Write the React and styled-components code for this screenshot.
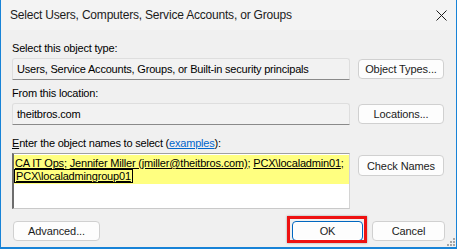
import React from "react";
import styled, { createGlobalStyle } from "styled-components";

const Global = createGlobalStyle`
  html, body { margin: 0; padding: 0; background: #f0f0f0; }
  body { font-family: "Liberation Sans", Arial, sans-serif; }
  * { box-sizing: border-box; }
`;

const Window = styled.div`
  position: relative;
  width: 457px;
  height: 249px;
  background: #f0f0f0;
  border-left: 1px solid #1883d7;
  border-right: 1px solid #1883d7;
  border-bottom: 2px solid #1883d7;
  display: flex;
  flex-direction: column;
  font-family: "Liberation Sans", Arial, sans-serif;
  color: #000;
  overflow: hidden;
`;

const TitleBar = styled.div`
  height: 30px;
  flex: none;
  display: flex;
  align-items: center;
  justify-content: space-between;
  padding: 0 9px 0 9px;
  background: #f3f3f3;
  font-size: 12px;
  letter-spacing: -0.2px;
  color: #1b1b1b;
`;

const Body = styled.div`
  flex: 1;
  display: flex;
  flex-direction: column;
  padding: 12px 11px 0 11px;
`;

const Label = styled.div`
  font-size: 11px;
  line-height: 13px;
  height: 13px;
  letter-spacing: -0.2px;
  margin-top: ${(p) => p.$top || 0}px;
  margin-bottom: 3px;
  white-space: nowrap;
`;

const Row = styled.div`
  display: grid;
  grid-template-columns: 338px 86px;
  column-gap: 8px;
  align-items: ${(p) => (p.$top ? "start" : "center")};
`;

const Field = styled.div`
  height: 22px;
  display: flex;
  align-items: center;
  padding-left: 4px;
  font-size: 11px;
  letter-spacing: -0.2px;
  background: #f2f2f2;
  border: 1px solid #dedede;
  border-bottom: 1px solid #8a8a8a;
  border-radius: 3px 3px 0 0;
  white-space: nowrap;
  overflow: hidden;
`;

const Button = styled.button`
  position: relative;
  height: ${(p) => p.$h || 20}px;
  width: ${(p) => (p.$w ? `${p.$w}px` : "auto")};
  margin-top: ${(p) => p.$mt || 0}px;
  padding: 0;
  font-family: "Liberation Sans", Arial, sans-serif;
  font-size: 11px;
  letter-spacing: -0.1px;
  color: #1b1b1b;
  background: #fdfdfd;
  border: 1px solid ${(p) => (p.$default ? "#0067c0" : "#d0d0d0")};
  box-shadow: ${(p) => (p.$default ? "inset 0 0 0 1px #ffffff" : "none")};
  border-radius: 4px;
  display: flex;
  align-items: center;
  justify-content: center;
`;

const Highlight = styled.span`
  position: absolute;
  inset: -6px -5px -3px -6px;
  border: 3px solid #ee1111;
  box-shadow: 0 0 2px rgba(0, 0, 0, 0.35);
  pointer-events: none;
`;

const Accel = styled.span`
  text-decoration: underline;
`;

const Link = styled.span`
  color: #0066cc;
  text-decoration: underline;
`;

const NamesBox = styled.div`
  height: 56px;
  background: #ffffff;
  border-top: 1px solid #a0a0a0;
  border-left: 2px solid #6d6d6d;
  border-right: 1px solid #d4d4d4;
  border-bottom: 1px solid #c9c9c9;
  padding-top: 1px;
`;

const Yellow = styled.div`
  background: #ffff80;
  padding: 2px 0 1px 1px;
`;

const Line = styled.div`
  font-size: 11px;
  line-height: 13px;
  height: 13px;
  white-space: nowrap;
  letter-spacing: -0.18px;
`;

const Name = styled.span`
  text-decoration: underline;
  ${(p) => (p.$focus ? "outline: 1px solid #000; outline-offset: 0px; padding: 0 1px;" : "")}
`;

const Footer = styled.div`
  display: flex;
  align-items: center;
  margin-top: 12px;
  padding-left: 1px;
  gap: 9px;
`;

const Spacer = styled.div`
  flex: 1;
`;

const Grip = styled.svg`
  position: absolute;
  right: 1px;
  bottom: 1px;
`;

const CloseIcon = () => (
  <svg width="11" height="11" viewBox="0 0 11 11">
    <path d="M0.5 0.5 L10.5 10.5 M10.5 0.5 L0.5 10.5" stroke="#1b1b1b" strokeWidth="1" fill="none" />
  </svg>
);

export default function App() {
  return (
    <>
      <Global />
      <Window>
        <TitleBar>
          <span>Select Users, Computers, Service Accounts, or Groups</span>
          <CloseIcon />
        </TitleBar>
        <Body>
          <Label>Select this object type:</Label>
          <Row>
            <Field>Users, Service Accounts, Groups, or Built-in security principals</Field>
            <Button>Object Types...</Button>
          </Row>
          <Label $top={7}>From this location:</Label>
          <Row>
            <Field>theitbros.com</Field>
            <Button>Locations...</Button>
          </Row>
          <Label $top={12}>
            <Accel>E</Accel>nter the object names to select (<Link>examples</Link>):
          </Label>
          <Row $top>
            <NamesBox>
              <Yellow>
                <Line>
                  <Name>CA IT Ops</Name>; <Name>Jennifer Miller (jmiller@theitbros.com)</Name>;{" "}
                  <Name>PCX\localadmin01</Name>;
                </Line>
                <Line>
                  <Name $focus>PCX\localadmingroup01</Name>
                </Line>
              </Yellow>
            </NamesBox>
            <Button $mt={2} $h={21}>Check Names</Button>
          </Row>
          <Footer>
            <Button $w={87}>Advanced...</Button>
            <Spacer />
            <Button $w={71} $default>
              OK
              <Highlight />
            </Button>
            <Button $w={73}>Cancel</Button>
          </Footer>
        </Body>
        <Grip width="9" height="9" viewBox="0 0 9 9">
          {[
            [7, 1],
            [4, 4],
            [7, 4],
            [1, 7],
            [4, 7],
            [7, 7],
          ].map(([x, y]) => (
            <rect key={`${x}-${y}`} x={x} y={y} width="2" height="2" fill="#a6a6a6" />
          ))}
        </Grip>
      </Window>
    </>
  );
}
